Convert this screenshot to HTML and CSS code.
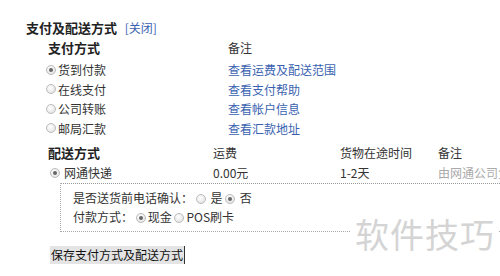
FILE: index.html
```html
<!DOCTYPE html>
<html lang="zh-CN">

<head>
    <meta charset="UTF-8">
    <title>支付及配送方式</title>
    <link rel="stylesheet" href="styles.css">
</head>

<body>

    <div class="panel">
        <div class="title">
            <b>支付及配送方式</b> <a href="#" class="close">[关闭]</a>
        </div>

        <div class="pay">
            <div class="head">支付方式</div>
            <div class="note">备注</div>

            <div class="opt"><span class="radio on"></span>货到付款</div>
            <a href="#">查看运费及配送范围</a>

            <div class="opt"><span class="radio"></span>在线支付</div>
            <a href="#">查看支付帮助</a>

            <div class="opt"><span class="radio"></span>公司转账</div>
            <a href="#">查看帐户信息</a>

            <div class="opt"><span class="radio"></span>邮局汇款</div>
            <a href="#">查看汇款地址</a>
        </div>

        <div class="ship">
            <div class="head">配送方式</div>
            <div>运费</div>
            <div>货物在途时间</div>
            <div>备注</div>

            <div class="opt"><span class="radio on"></span>网通快递</div>
            <div>0.00元</div>
            <div>1-2天</div>
            <div class="grey">由网通公司负责</div>
        </div>

        <div class="extra">
            <div class="line">是否送货前电话确认： <span class="radio"></span> 是 <span class="radio on"></span> 否</div>
            <div class="line">付款方式： <span class="radio on"></span>现金 <span class="radio"></span>POS刷卡</div>
        </div>

        <button class="save">保存支付方式及配送方式</button>
    </div>

    <div class="mark">软件技巧</div>

</body>

</html>
```

FILE: styles.css
```css
body {
    margin: 0;
    width: 500px;
    height: 276px;
    overflow: hidden;
    background: #fff;
    font-family: "Noto Sans CJK SC", "Microsoft YaHei", sans-serif;
    font-size: 12px;
    color: #333;
    position: relative;
}

a {
    color: #3a62b0;
    text-decoration: none;
}

.panel {
    padding-top: 18px;
}

.title {
    padding-left: 26px;
    height: 19px;
    line-height: 19px;
}

.title b {
    font-size: 13px;
    color: #222;
}

.title .close {
    margin-left: 5px;
    font-size: 12px;
}

.pay {
    display: grid;
    grid-template-columns: 182px auto;
    padding: 0 0 0 46px;
    margin-top: 1px;
    line-height: 19.5px;
}

.head {
    font-weight: bold;
    font-size: 13px;
    color: #222;
    padding-left: 2px;
    line-height: 20px;
    margin-bottom: 2px;
}

.note {
    line-height: 20px;
}

.opt {
    display: flex;
    align-items: center;
}

.radio {
    display: inline-block;
    width: 8px;
    height: 8px;
    border-radius: 50%;
    border: 1px solid #bbb;
    background: radial-gradient(circle at 40% 35%, #fff, #ddd);
    margin-right: 2px;
    vertical-align: -1px;
    position: relative;
}

.radio.on::after {
    content: "";
    position: absolute;
    left: 2px;
    top: 2px;
    width: 4px;
    height: 4px;
    border-radius: 50%;
    background: #666;
}

.ship {
    display: grid;
    grid-template-columns: 165px 127px 98px 62px;
    padding-left: 48px;
    margin-top: 5px;
    line-height: 19px;
    white-space: nowrap;
}

.ship .head {
    padding-left: 0;
    margin-bottom: 0;
}

.ship .opt {
    padding-left: 2px;
}

.ship .opt .radio {
    margin-right: 4px;
}

.grey {
    color: #aaa;
    overflow: hidden;
}

.extra {
    margin: 1px 0 0 60px;
    border-top: 1px dotted #999;
    border-left: 1px dotted #aaa;
    border-bottom: 1px dotted #aaa;
    padding: 4px 0 5px 12px;
    line-height: 19px;
}

.save {
    margin: 14px 0 0 50px;
    padding: 0 1px;
    height: 18px;
    font-family: "Noto Sans CJK SC", sans-serif;
    font-size: 12px;
    color: #111;
    background: #e4e4e4;
    border: none;
    border-right: 1px solid #333;
    line-height: 18px;
}

.mark {
    position: absolute;
    left: 351px;
    top: 212px;
    padding: 0 4px;
    background: #fff;
    font-size: 34px;
    color: #d4d4d4;
    letter-spacing: 1px;
    line-height: 44px;
}
```
